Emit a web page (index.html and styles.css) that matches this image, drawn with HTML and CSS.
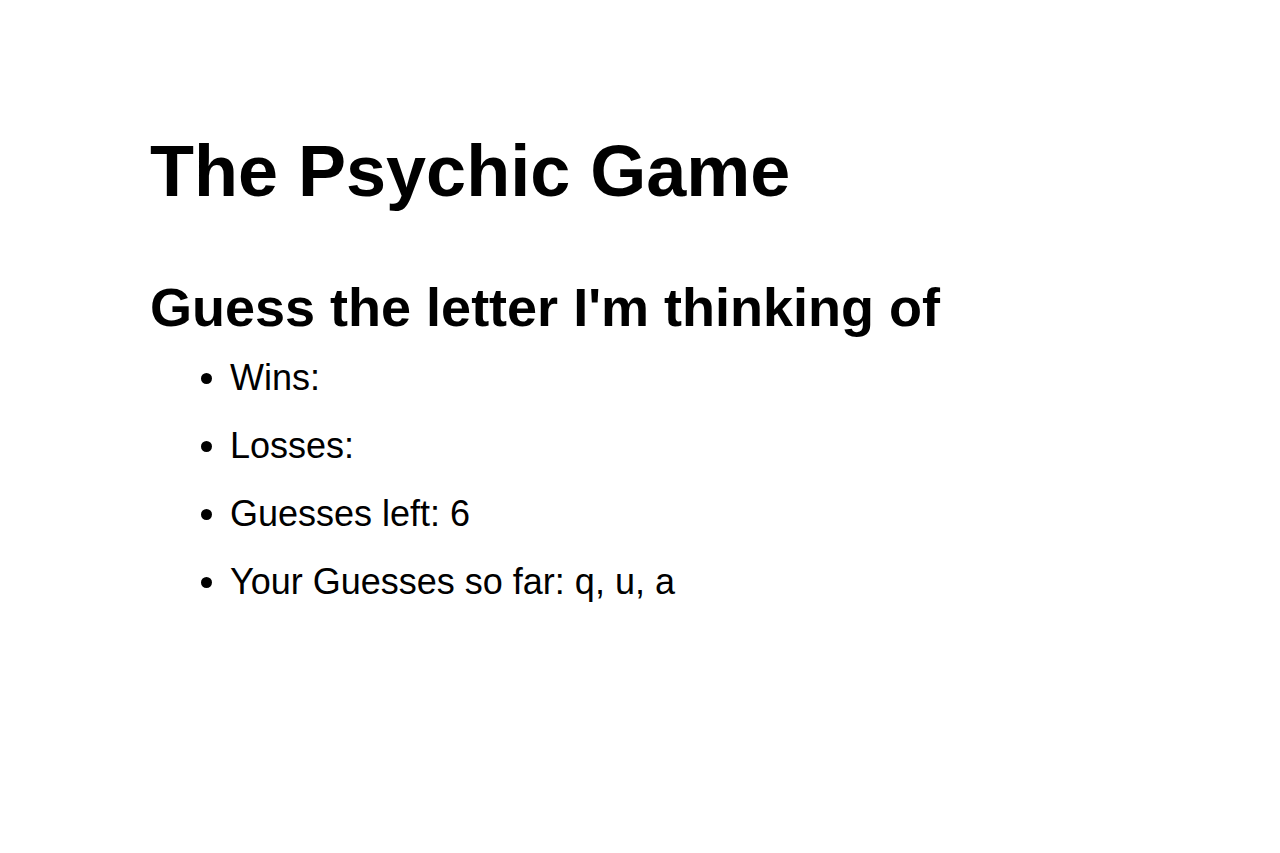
FILE: index.html
```html
<!DOCTYPE html>
<html lang="en">
<head>
<meta charset="utf-8">
<title>The Psychic Game</title>
<link rel="stylesheet" href="styles.css">
</head>
<body>
<main class="game">
  <h1 class="title">The Psychic Game</h1>
  <h2 class="subtitle">Guess the letter I'm thinking of</h2>
  <ul class="stats">
    <li class="stat">Wins: <span class="wins"></span></li>
    <li class="stat">Losses: <span class="losses"></span></li>
    <li class="stat">Guesses left: <span class="left">6</span></li>
    <li class="stat">Your Guesses so far: <span class="guesses">q, u, a</span></li>
  </ul>
</main>
</body>
</html>
```
FILE: styles.css
```css
html, body {
  margin: 0;
  padding: 0;
  background: #fff;
  color: #000;
  font-family: "Liberation Sans", Arial, Helvetica, sans-serif;
}
.game {
  padding: 121px 0 0 150px;
}
.title {
  font-size: 72px;
  font-weight: bold;
  margin: 0;
  line-height: 100px;
}
.subtitle {
  font-size: 54px;
  font-weight: bold;
  margin: 56px 0 0 0;
  line-height: 60px;
}
.stats {
  margin: 7px 0 0 0;
  padding-left: 80px;
  font-size: 36px;
}
.stat {
  line-height: 68px;
}
```
